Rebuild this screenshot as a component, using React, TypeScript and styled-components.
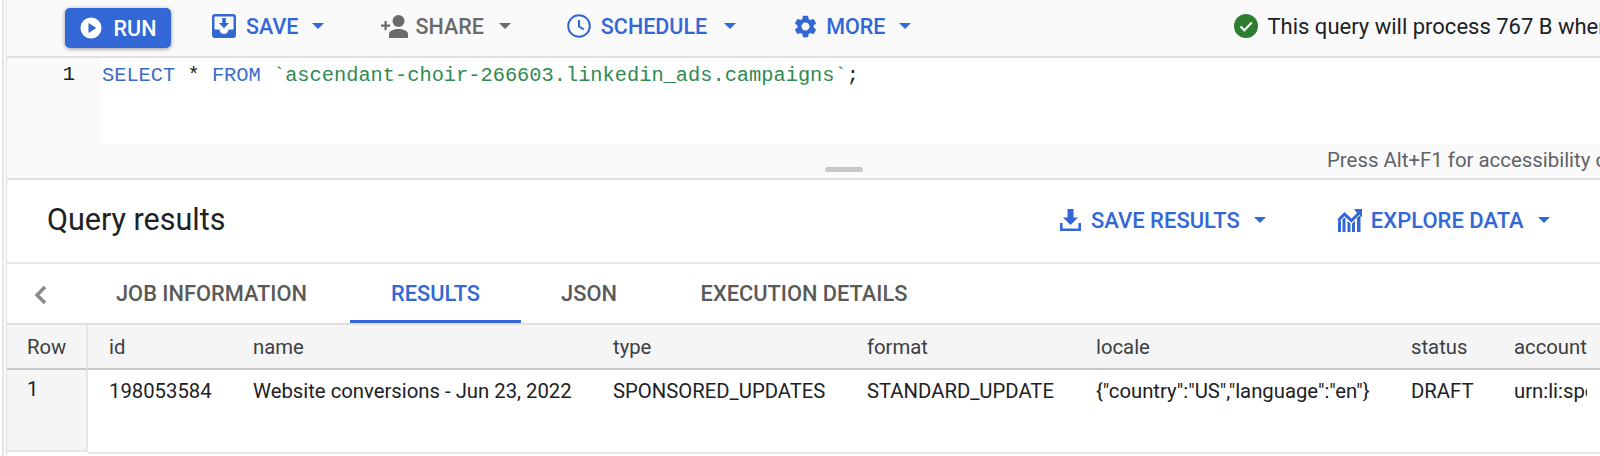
import React from "react";
import styled, { createGlobalStyle } from "styled-components";
import { MdSettings } from "react-icons/md";

const GlobalStyle = createGlobalStyle`
  html, body {
    margin: 0;
    padding: 0;
    background: #fff;
    overflow: hidden;
  }
  body {
    font-family: Roboto, "Liberation Sans", sans-serif;
  }
`;

const BLUE = "#3367d6";

const Page = styled.div`
  width: 1600px;
  height: 456px;
  overflow: hidden;
  box-sizing: border-box;
  padding-left: 2px;
  background: #fff;
`;

const Shell = styled.div`
  height: 100%;
  box-sizing: border-box;
  border-left: 2px solid #e6e6e6;
  padding-left: 2px;
  background: #fafafa;
`;

const Content = styled.div`
  height: 100%;
  border-left: 1px solid #e2e2e2;
  background: #fff;
`;

const Toolbar = styled.div`
  height: 58px;
  box-sizing: border-box;
  background: #fafafa;
  border-bottom: 2px solid #e0e0e0;
  display: flex;
  align-items: center;
  padding-left: 58px;
  white-space: nowrap;
  overflow: hidden;
`;

const RunButton = styled.button`
  width: 106px;
  height: 40px;
  flex: none;
  border: none;
  border-radius: 5px;
  background: ${BLUE};
  color: #fff;
  box-shadow: 0 1px 4px rgba(0, 0, 0, 0.4);
  display: flex;
  align-items: center;
  justify-content: center;
  gap: 12px;
  font: 500 21.5px Roboto, sans-serif;
  padding: 0;
`;

const ToolButton = styled.div<{ $muted?: boolean; $left: number; $gap?: number }>`
  display: flex;
  flex: none;
  align-items: center;
  margin-left: ${(p) => p.$left}px;
  margin-top: -4px;
  gap: ${(p) => p.$gap ?? 10}px;
  color: ${(p) => (p.$muted ? "#6b6b6b" : BLUE)};
  font-size: 21.5px;
  font-weight: 500;
`;

const HeaderButton = styled(ToolButton)`
  margin-top: 2px;
  font-size: 22px;
`;

const Caret = styled.span<{ $muted?: boolean; $left?: number }>`
  width: 0;
  height: 0;
  border-left: 6.5px solid transparent;
  border-right: 6.5px solid transparent;
  border-top: 6.5px solid ${(p) => (p.$muted ? "#6b6b6b" : BLUE)};
  margin-left: ${(p) => p.$left ?? 4}px;
`;

const Validator = styled.div`
  display: flex;
  flex: none;
  align-items: center;
  gap: 9px;
  margin-left: 323px;
  margin-top: -4px;
  font-size: 22px;
  color: #202124;
`;

const Editor = styled.div`
  height: 86px;
  background: #fafafa;
  display: flex;
`;

const Gutter = styled.div`
  width: 94px;
  flex: none;
  box-sizing: border-box;
  padding: 5px 26px 0 0;
  text-align: right;
  font: 21px/24px "Liberation Mono", monospace;
  color: #202124;
`;

const Code = styled.div`
  flex: 1;
  background: #fff;
  padding-top: 6px;
  padding-left: 1px;
  font: 20.35px/24px "Liberation Mono", monospace;
  color: #202124;
  white-space: pre;
`;

const Keyword = styled.span`
  color: #3b6bc9;
`;

const Str = styled.span`
  color: #2f8a52;
`;

const StatusBar = styled.div`
  height: 36px;
  box-sizing: border-box;
  background: #fafafa;
  border-bottom: 2px solid #e0e0e0;
  display: flex;
  padding-left: 818px;
  white-space: nowrap;
  overflow: hidden;
`;

const Grip = styled.span`
  flex: none;
  width: 38px;
  height: 5px;
  margin-top: 23px;
  border-radius: 3px;
  background: #c8c8c8;
`;

const Hint = styled.span`
  flex: none;
  margin-left: 464px;
  padding-top: 4px;
  font-size: 20.4px;
  line-height: 24px;
  color: #5f6368;
`;

const ResultsHeader = styled.div`
  height: 84px;
  box-sizing: border-box;
  border-bottom: 2px solid #e6e6e6;
  display: flex;
  align-items: center;
  padding: 0 0 4px 40px;
`;

const Title = styled.h2`
  margin: 0;
  flex: none;
  width: 1013px;
  font-size: 30.5px;
  font-weight: 400;
  color: #202124;
`;

const Tabs = styled.div`
  height: 61px;
  box-sizing: border-box;
  border-bottom: 2px solid #e0e0e0;
  display: flex;
  align-items: stretch;
  padding-left: 21px;
`;

const Tab = styled.div<{ $active?: boolean; $width: number }>`
  width: ${(p) => p.$width}px;
  display: flex;
  align-items: center;
  justify-content: center;
  box-sizing: border-box;
  font-size: 21.8px;
  font-weight: 500;
  color: ${(p) => (p.$active ? BLUE : "#5a5a5a")};
  border-bottom: 3px solid ${(p) => (p.$active ? BLUE : "transparent")};
  padding-top: 3px;
`;

const Grid = styled.div`
  display: grid;
  grid-template-columns: 81px 144px 360px 254px 229px 315px 103px 94px 1fr;
  align-items: start;
`;

const HeadCell = styled.div<{ $first?: boolean }>`
  height: 45px;
  box-sizing: border-box;
  background: #f5f5f5;
  border-bottom: 2px solid #c8c8c8;
  border-right: ${(p) => (p.$first ? "2px solid #e6e6e6" : "none")};
  display: flex;
  align-items: center;
  padding-left: ${(p) => (p.$first ? 20 : 21)}px;
  font-size: 20.3px;
  color: #3c4043;
  white-space: nowrap;
`;

const Cell = styled.div<{ $first?: boolean }>`
  height: ${(p) => (p.$first ? 82 : 84)}px;
  box-sizing: border-box;
  background: ${(p) => (p.$first ? "#f5f5f5" : "#fff")};
  border-bottom: 2px solid #e6e6e6;
  border-right: ${(p) => (p.$first ? "2px solid #e6e6e6" : "none")};
  padding-left: ${(p) => (p.$first ? 20 : 21)}px;
  padding-top: ${(p) => (p.$first ? 7 : 9)}px;
  font-size: 20.3px;
  line-height: 24px;
  color: #202124;
  white-space: nowrap;
  overflow: hidden;
`;

const Icon = styled.svg`
  flex: none;
  display: block;
`;

const Chevron = styled.svg`
  flex: none;
  align-self: center;
  margin-right: 21px;
`;

const columns = ["id", "name", "type", "format", "locale", "status", "account"];
const row = [
  "198053584",
  "Website conversions - Jun 23, 2022",
  "SPONSORED_UPDATES",
  "STANDARD_UPDATE",
  '{"country":"US","language":"en"}',
  "DRAFT",
  "urn:li:sponsoredAccount:5",
];

export default function App() {
  return (
    <Page>
      <GlobalStyle />
      <Shell>
        <Content>
          <Toolbar>
            <RunButton>
              <Icon width="22" height="22" viewBox="0 0 24 24">
                <circle cx="12" cy="12" r="11.500" fill="#fff" />
                <path d="M9.300 6.500v11l8.500-5.500z" fill={BLUE} />
              </Icon>
              RUN
            </RunButton>
            <ToolButton $left={41}>
              <Icon width="24" height="24" viewBox="0 0 24 24" fill={BLUE}>
                <path
                  fillRule="evenodd"
                  d="M3 0h18a3 3 0 0 1 3 3v18a3 3 0 0 1-3 3H3a3 3 0 0 1-3-3V3a3 3 0 0 1 3-3zm-.5 2.500v13h5a4.500 4.500 0 0 0 9 0h5v-13z"
                />
                <path d="M10.200 4h3.600v5H17l-5 5.200L7 9h3.200z" />
              </Icon>
              SAVE
              <Caret $left={4} />
            </ToolButton>
            <ToolButton $muted $left={57} $gap={7}>
              <Icon width="27" height="24" viewBox="0 0 27 24" fill="#6b6b6b">
                <path d="M0 10.500h3.500V7h2.200v3.500h3.500v2.200H5.700v3.500H3.500v-3.500H0z" />
                <circle cx="17.500" cy="7" r="6" />
                <path d="M17.500 15c-4 0-9.500 1.800-9.500 4.800V24h19v-4.200c0-3-5.500-4.800-9.500-4.800z" />
              </Icon>
              SHARE
              <Caret $muted $left={8} />
            </ToolButton>
            <ToolButton $left={56}>
              <Icon width="24" height="24" viewBox="0 0 24 24" fill="none" stroke={BLUE} strokeWidth="2">
                <circle cx="12" cy="12" r="10.800" />
                <path d="M12 6v6.500l4.800 2.900" />
              </Icon>
              SCHEDULE
              <Caret $left={7} />
            </ToolButton>
            <ToolButton $left={56} $gap={7}>
              <MdSettings size={27} color={BLUE} />
              MORE
              <Caret $left={7} />
            </ToolButton>
            <Validator>
              <Icon width="24" height="24" viewBox="0 0 24 24">
                <circle cx="12" cy="12" r="12" fill="#2e7d32" />
                <path d="M6.500 12.500l3.800 3.800 7.500-7.800" fill="none" stroke="#fff" strokeWidth="2" />
              </Icon>
              <span>This query will process 767 B when run.</span>
            </Validator>
          </Toolbar>
          <Editor>
            <Gutter>1</Gutter>
            <Code>
              <Keyword>SELECT</Keyword> * <Keyword>FROM</Keyword>{" "}
              <Str>`ascendant-choir-266603.linkedin_ads.campaigns`</Str>;
            </Code>
          </Editor>
          <StatusBar>
            <Grip />
            <Hint>Press Alt+F1 for accessibility options</Hint>
          </StatusBar>
          <ResultsHeader>
            <Title>Query results</Title>
            <HeaderButton $left={0}>
              <Icon width="21" height="24" viewBox="0 0 21 24" fill={BLUE}>
                <path d="M7.500 1h6v8.500h4.500l-7.500 7.500L3 9.500h4.500z" />
                <path d="M0 15h2.600v5.500h15.800V15H21v8H0z" />
              </Icon>
              SAVE RESULTS
              <Caret $left={4} />
            </HeaderButton>
            <HeaderButton $left={72} $gap={9}>
              <Icon width="24" height="24" viewBox="0 0 24 24" fill={BLUE}>
                <path d="M0 14.500l3-2.500v12H0zM4.500 11l3-1.500V24h-3zM9.500 13l3 2.500V24h-3zM14 15.500l3-2.500v11h-3zM19 10l3.500-3v17H19z" />
                <path d="M0 10.500l6.500-6.500 7 6.500 5.500-5.500-3-4H24v8.500l-2.500-2.800-8 8-7-6.500L0 14.500z" />
              </Icon>
              EXPLORE DATA
              <Caret $left={5} />
            </HeaderButton>
          </ResultsHeader>
          <Tabs>
            <Chevron width="24" height="40" viewBox="0 0 24 40">
              <path d="M17 13l-8 8 8 8" fill="none" stroke="#8a8a8a" strokeWidth="3.500" />
            </Chevron>
            <Tab $width={277}>JOB INFORMATION</Tab>
            <Tab $width={171} $active>RESULTS</Tab>
            <Tab $width={136}>JSON</Tab>
            <Tab $width={294}>EXECUTION DETAILS</Tab>
          </Tabs>
          <Grid>
            <HeadCell $first>Row</HeadCell>
            {columns.map((c) => (
              <HeadCell key={c}>{c}</HeadCell>
            ))}
            <HeadCell />
            <Cell $first>1</Cell>
            {row.map((v) => (
              <Cell key={v}>{v}</Cell>
            ))}
            <Cell />
          </Grid>
        </Content>
      </Shell>
    </Page>
  );
}
